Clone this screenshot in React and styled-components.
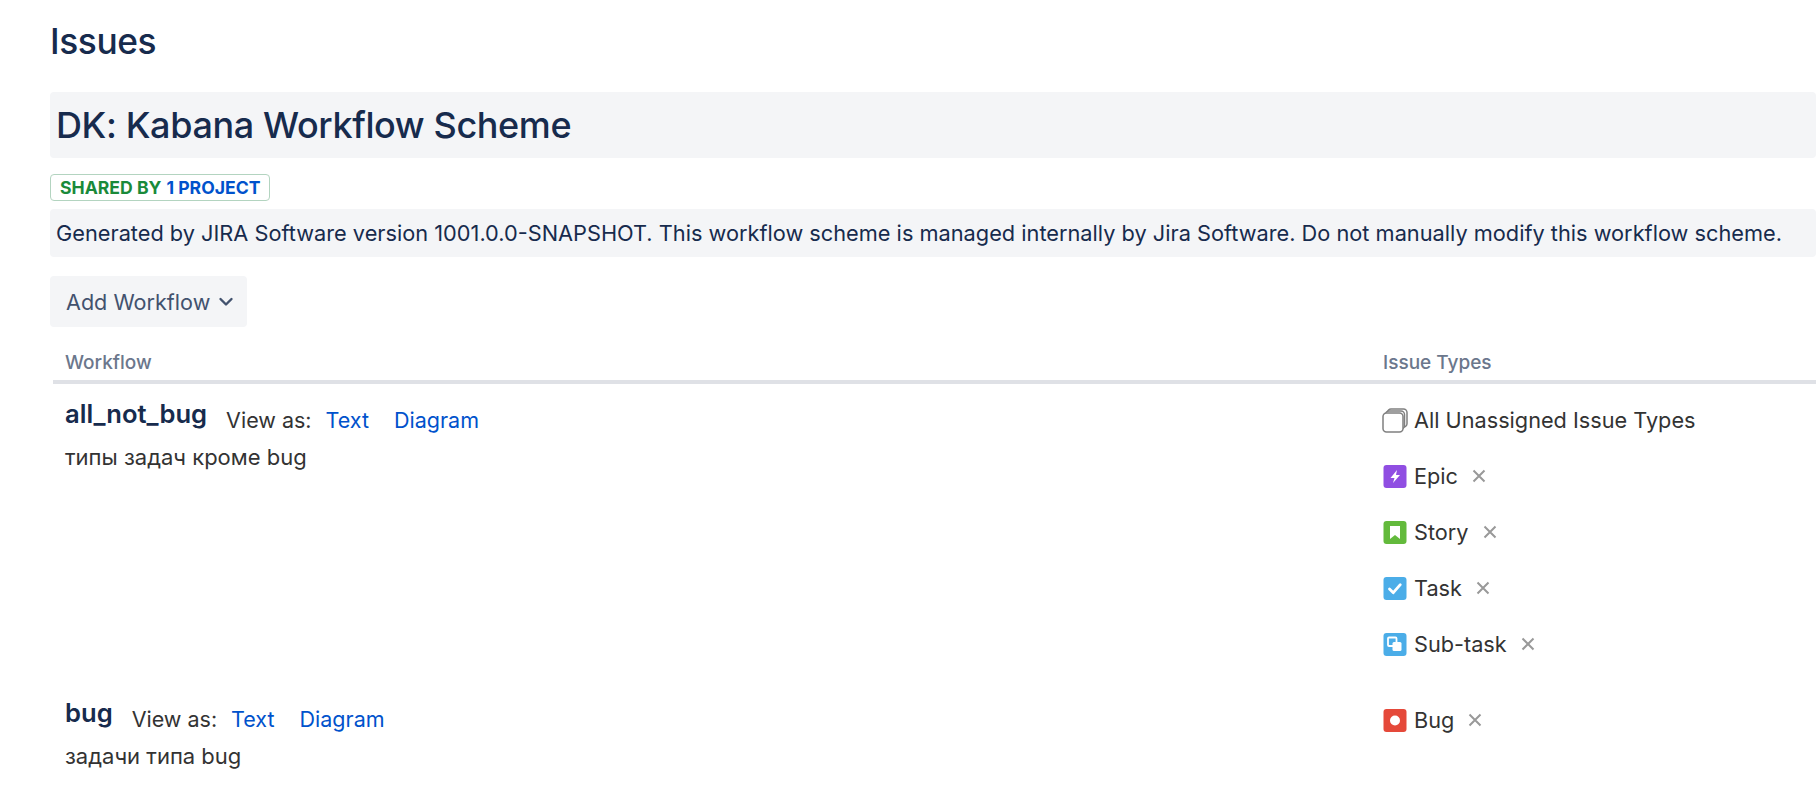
import React from 'react';
import styled, { createGlobalStyle } from 'styled-components';

const GlobalStyle = createGlobalStyle`
    html, body {
        margin: 0;
        padding: 0;
        background: #fff;
        overflow: hidden;
    }
    body {
        font-family: Inter, "Noto Sans", sans-serif;
        color: #333;
    }
`;

const Page = styled.div`
    width: 1816px;
    height: 794px;
    overflow: hidden;
    padding: 21px 0 0 50px;
    box-sizing: border-box;
`;

const PageTitle = styled.h1`
    margin: 0 0 30px;
    font-size: 35.3px;
    line-height: 41px;
    font-weight: 500;
    color: #172b4d;
    letter-spacing: -0.4px;
`;

const SchemeName = styled.h2`
    margin: 0 0 16px;
    padding: 0 6px;
    height: 66px;
    line-height: 66px;
    font-size: 36px;
    font-weight: 500;
    color: #172b4d;
    background: #f4f5f7;
    border-radius: 4px;
    letter-spacing: -0.38px;
`;

const SharedBadge = styled.div`
    display: inline-flex;
    align-items: center;
    box-sizing: border-box;
    height: 27px;
    padding: 0 9px;
    border: 1px solid #b3d4c0;
    border-radius: 4px;
    font-size: 17.6px;
    font-weight: 700;
    color: #1a8a3a;
    gap: 5px;
`;

const ProjectCount = styled.span`
    color: #0052cc;
`;

const Description = styled.div`
    margin: 8px 0 0;
    padding: 0 6px;
    height: 48px;
    line-height: 48px;
    font-size: 21.75px;
    color: #172b4d;
    background: #f4f5f7;
    border-radius: 4px;
    white-space: nowrap;
`;

const AddButton = styled.button`
    display: flex;
    align-items: center;
    gap: 8px;
    margin: 19px 0 0;
    height: 51px;
    padding: 0 13px 0 16px;
    border: 0;
    border-radius: 4px;
    background: #f4f5f7;
    color: #42526e;
    font-family: inherit;
    font-size: 21.6px;
`;

const Table = styled.div`
    margin: 17px 0 0 3px;
`;

const HeaderRow = styled.div`
    display: grid;
    grid-template-columns: 1330px 1fr;
    height: 36px;
    align-items: center;
    border-bottom: 4px solid #dfe1e6;
    font-size: 19px;
    font-weight: 500;
    color: #6b778c;
`;

const HeaderCell = styled.div`
    padding-left: ${(p) => p.$indent || 0}px;
`;

const Row = styled.div`
    display: grid;
    grid-template-columns: 1330px 1fr;
    padding-bottom: ${(p) => p.$bottom || 0}px;
`;

const WorkflowCell = styled.div`
    padding: ${(p) => p.$top}px 0 0 12px;
`;

const NameLine = styled.div`
    display: flex;
    align-items: baseline;
    height: 40px;
    font-size: 21.5px;
`;

const WorkflowName = styled.span`
    font-size: 25.6px;
    font-weight: 600;
    color: #172b4d;
    margin-right: 19px;
    position: relative;
    top: -5px;
`;

const ViewLabel = styled.span`
    margin-right: 14px;
`;

const ViewLink = styled.a`
    color: #0052cc;
    margin-right: 25px;
`;

const WorkflowDescription = styled.div`
    font-size: 22px;
    line-height: 28px;
`;

const TypesCell = styled.div`
    display: flex;
    flex-direction: column;
    gap: 24px;
    padding: 20px 0 0 0;
`;

const TypeItem = styled.div`
    display: flex;
    align-items: center;
    height: 32px;
    font-size: 21.7px;
`;

const TypeIcon = styled.svg`
    width: 24px;
    height: 24px;
    flex: none;
    margin-right: 7px;
    overflow: visible;
`;

const RemoveIcon = styled.svg`
    width: 14px;
    height: 14px;
    margin-left: 14px;
`;

const Chevron = styled.svg`
    width: 16px;
    height: 16px;
`;

function Glyph({ type }) {
    if (type === 'all') {
        return (
            <TypeIcon viewBox="0 0 24 24" fill="#fff" stroke="#808080" strokeWidth="1.5">
                <rect x="4.5" y="1" width="19.5" height="18" rx="3.5" />
                <rect x="2.5" y="3" width="19" height="18" rx="3.5" />
                <rect x="0" y="5" width="20" height="19" rx="3.5" />
            </TypeIcon>
        );
    }
    const colors = { epic: '#904ee2', story: '#63ba3c', task: '#4bade8', subtask: '#4bade8', bug: '#e5493a' };
    return (
        <TypeIcon viewBox="0 0 24 24">
            <rect x="0.5" y="1" width="23" height="23" rx="3" fill={colors[type]} />
            {type === 'epic' && <path d="M14 6L7.500 14h4L10 19l7-8h-4z" fill="#fff" />}
            {type === 'story' && <path d="M7 6h10v13l-5-4-5 4z" fill="#fff" />}
            {type === 'task' && (
                <path d="M6.500 13l3.800 3.700 7-8" fill="none" stroke="#fff" strokeWidth="2.8" strokeLinecap="round" strokeLinejoin="round" />
            )}
            {type === 'subtask' && (
                <>
                    <rect x="5" y="5.500" width="8.500" height="8.500" rx="1" fill="none" stroke="#fff" strokeWidth="1.8" />
                    <rect x="9.500" y="10" width="9" height="9" rx="1.500" fill="#fff" />
                </>
            )}
            {type === 'bug' && <circle cx="12" cy="12.500" r="5" fill="#fff" />}
        </TypeIcon>
    );
}

function IssueType({ type, label, removable = true }) {
    return (
        <TypeItem>
            <Glyph type={type} />
            {label}
            {removable && (
                <RemoveIcon viewBox="0 0 14 14" stroke="#999" strokeWidth="2">
                    <path d="M1.500 1.500l11 11M12.500 1.500l-11 11" />
                </RemoveIcon>
            )}
        </TypeItem>
    );
}

function WorkflowInfo({ name, description, top }) {
    return (
        <WorkflowCell $top={top}>
            <NameLine>
                <WorkflowName>{name}</WorkflowName>
                <ViewLabel>View as:</ViewLabel>
                <ViewLink>Text</ViewLink>
                <ViewLink>Diagram</ViewLink>
            </NameLine>
            <WorkflowDescription>{description}</WorkflowDescription>
        </WorkflowCell>
    );
}

export default function App() {
    return (
        <Page>
            <GlobalStyle />
            <PageTitle>Issues</PageTitle>
            <SchemeName>DK: Kabana Workflow Scheme</SchemeName>
            <SharedBadge>
                SHARED BY <ProjectCount>1 PROJECT</ProjectCount>
            </SharedBadge>
            <Description>
                Generated by JIRA Software version 1001.0.0-SNAPSHOT. This workflow scheme is managed internally by Jira
                Software. Do not manually modify this workflow scheme.
            </Description>
            <AddButton>
                Add Workflow
                <Chevron viewBox="0 0 16 16" fill="none" stroke="#42526e" strokeWidth="2.4" strokeLinecap="round" strokeLinejoin="round">
                    <path d="M2.500 5l5.500 5.500L13.500 5" />
                </Chevron>
            </AddButton>
            <Table>
                <HeaderRow>
                    <HeaderCell $indent={12}>Workflow</HeaderCell>
                    <HeaderCell>Issue Types</HeaderCell>
                </HeaderRow>
                <Row $bottom={24}>
                    <WorkflowInfo top={19} name="all_not_bug" description="типы задач кроме bug" />
                    <TypesCell>
                        <IssueType type="all" label="All Unassigned Issue Types" removable={false} />
                        <IssueType type="epic" label="Epic" />
                        <IssueType type="story" label="Story" />
                        <IssueType type="task" label="Task" />
                        <IssueType type="subtask" label="Sub-task" />
                    </TypesCell>
                </Row>
                <Row>
                    <WorkflowInfo top={18} name="bug" description="задачи типа bug" />
                    <TypesCell>
                        <IssueType type="bug" label="Bug" />
                    </TypesCell>
                </Row>
            </Table>
        </Page>
    );
}
